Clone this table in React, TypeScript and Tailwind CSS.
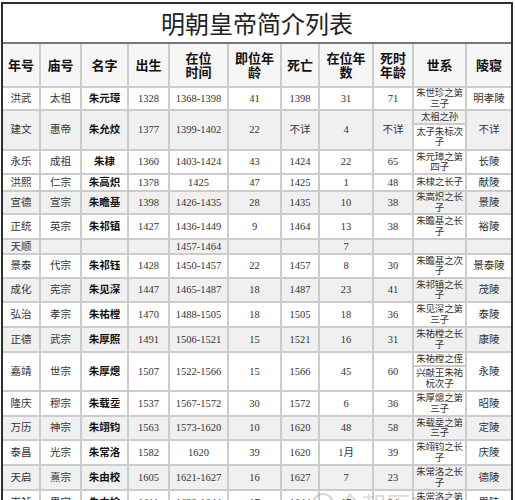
import React from 'react';

type Row = {
    era: string;
    temple: string;
    name: string;
    born: string;
    reign: string;
    ageIn: string;
    died: string;
    years: string;
    ageOut: string;
    lineage: string | [string, string];
    tomb: string;
    gray?: boolean;
    h: string;
};

const rows: Row[] = [
    { era: '洪武', temple: '太祖', name: '朱元璋', born: '1328', reign: '1368-1398', ageIn: '41', died: '1398', years: '31', ageOut: '71', lineage: '朱世珍之第三子', tomb: '明孝陵', h: 'h-[23px]' },
    { era: '建文', temple: '惠帝', name: '朱允炆', born: '1377', reign: '1399-1402', ageIn: '22', died: '不详', years: '4', ageOut: '不详', lineage: ['太祖之孙', '太子朱标次子'], tomb: '不详', gray: true, h: 'h-[14px]' },
    { era: '永乐', temple: '成祖', name: '朱棣', born: '1360', reign: '1403-1424', ageIn: '43', died: '1424', years: '22', ageOut: '65', lineage: '朱元璋之第四子', tomb: '长陵', h: 'h-[24px]' },
    { era: '洪熙', temple: '仁宗', name: '朱高炽', born: '1378', reign: '1425', ageIn: '47', died: '1425', years: '1', ageOut: '48', lineage: '朱棣之长子', tomb: '献陵', h: 'h-[17px]' },
    { era: '宣德', temple: '宣宗', name: '朱瞻基', born: '1398', reign: '1426-1435', ageIn: '28', died: '1435', years: '10', ageOut: '38', lineage: '朱高炽之长子', tomb: '景陵', gray: true, h: 'h-[22px]' },
    { era: '正统', temple: '英宗', name: '朱祁镇', born: '1427', reign: '1436-1449', ageIn: '9', died: '1464', years: '13', ageOut: '38', lineage: '朱瞻基之长子', tomb: '裕陵', h: 'h-[25px]' },
    { era: '天顺', temple: '', name: '', born: '', reign: '1457-1464', ageIn: '', died: '', years: '7', ageOut: '', lineage: '', tomb: '', gray: true, h: 'h-[15px]' },
    { era: '景泰', temple: '代宗', name: '朱祁钰', born: '1428', reign: '1450-1457', ageIn: '22', died: '1457', years: '8', ageOut: '30', lineage: '朱瞻基之次子', tomb: '景泰陵', h: 'h-[24px]' },
    { era: '成化', temple: '宪宗', name: '朱见深', born: '1447', reign: '1465-1487', ageIn: '18', died: '1487', years: '23', ageOut: '41', lineage: '朱祁镇之长子', tomb: '茂陵', gray: true, h: 'h-[24px]' },
    { era: '弘治', temple: '孝宗', name: '朱祐樘', born: '1470', reign: '1488-1505', ageIn: '18', died: '1505', years: '18', ageOut: '36', lineage: '朱见深之第三子', tomb: '泰陵', h: 'h-[25px]' },
    { era: '正德', temple: '武宗', name: '朱厚照', born: '1491', reign: '1506-1521', ageIn: '15', died: '1521', years: '16', ageOut: '31', lineage: '朱祐樘之长子', tomb: '康陵', gray: true, h: 'h-[25px]' },
    { era: '嘉靖', temple: '世宗', name: '朱厚熜', born: '1507', reign: '1522-1566', ageIn: '15', died: '1566', years: '45', ageOut: '60', lineage: ['朱祐樘之侄', '兴献王朱祐杬次子'], tomb: '永陵', h: 'h-[14px]' },
    { era: '隆庆', temple: '穆宗', name: '朱载坖', born: '1537', reign: '1567-1572', ageIn: '30', died: '1572', years: '6', ageOut: '36', lineage: '朱厚熜之第三子', tomb: '昭陵', h: 'h-[25px]' },
    { era: '万历', temple: '神宗', name: '朱翊钧', born: '1563', reign: '1573-1620', ageIn: '10', died: '1620', years: '48', ageOut: '58', lineage: '朱载坖之第三子', tomb: '定陵', gray: true, h: 'h-[24px]' },
    { era: '泰昌', temple: '光宗', name: '朱常洛', born: '1582', reign: '1620', ageIn: '39', died: '1620', years: '1月', ageOut: '39', lineage: '朱翊钧之长子', tomb: '庆陵', h: 'h-[25px]' },
    { era: '天启', temple: '熹宗', name: '朱由校', born: '1605', reign: '1621-1627', ageIn: '16', died: '1627', years: '7', ageOut: '23', lineage: '朱常洛之长子', tomb: '德陵', gray: true, h: 'h-[25px]' },
    { era: '崇祯', temple: '思宗', name: '朱由检', born: '1611', reign: '1628-1644', ageIn: '17', died: '1644', years: '17', ageOut: '34', lineage: '朱常洛之第五子', tomb: '思陵', h: 'h-[25px]' },
];

const headers = ['年号', '庙号', '名字', '出生', '在位\n时间', '即位年\n龄', '死亡', '在位年\n数', '死时\n年龄', '世系', '陵寝'];

const cell = 'border-2 border-[#cccccc] text-center align-middle p-0 first:border-l-0 last:border-r-0';
const lineageCell = `${cell} text-[9.5px] leading-[10.5px] tracking-[-0.2px]`;

export default function App() {
    return (
        <div className="relative w-[515px] h-[500px] overflow-hidden bg-white font-['Liberation_Serif','Noto_Sans_CJK_SC',serif] text-[#333]">
            <div className="ml-[1px] mt-[2px] w-[512px] border-x-2 border-t-2 border-[#2e2e2e]">
                <div className="h-[40px] flex items-center justify-center border-b-2 border-[#777] text-[24px] text-[#222] font-['Noto_Sans_CJK_SC',sans-serif]">
                    明朝皇帝简介列表
                </div>
                <table className="w-full table-fixed border-collapse">
                    <colgroup>
                        <col className="w-[37px]" />
                        <col className="w-[41px]" />
                        <col className="w-[47px]" />
                        <col className="w-[41px]" />
                        <col className="w-[59px]" />
                        <col className="w-[53px]" />
                        <col className="w-[38px]" />
                        <col className="w-[54px]" />
                        <col className="w-[40px]" />
                        <col className="w-[53px]" />
                        <col className="w-[45px]" />
                    </colgroup>
                    <thead>
                        <tr className="h-[43px] bg-[#f6f6f6]">
                            {headers.map(h => (
                                <th key={h} className={`${cell} border-t-0 whitespace-pre-line text-[13px] leading-[14px] font-bold text-[#111] font-['Noto_Sans_CJK_SC',sans-serif]`}>
                                    {h}
                                </th>
                            ))}
                        </tr>
                    </thead>
                    <tbody className="text-[10.5px] leading-[10px]">
                        {rows.map(r => {
                            const split = Array.isArray(r.lineage);
                            const span = split ? 2 : 1;
                            const bg = r.gray ? 'bg-[#f0f0f0]' : 'bg-white';
                            return (
                                <React.Fragment key={r.era}>
                                    <tr className={`${r.h} ${bg}`}>
                                        <td rowSpan={span} className={cell}>{r.era}</td>
                                        <td rowSpan={span} className={cell}>{r.temple}</td>
                                        <td rowSpan={span} className={`${cell} font-bold text-[#111]`}>{r.name}</td>
                                        <td rowSpan={span} className={cell}>{r.born}</td>
                                        <td rowSpan={span} className={cell}>{r.reign}</td>
                                        <td rowSpan={span} className={cell}>{r.ageIn}</td>
                                        <td rowSpan={span} className={cell}>{r.died}</td>
                                        <td rowSpan={span} className={cell}>{r.years}</td>
                                        <td rowSpan={span} className={cell}>{r.ageOut}</td>
                                        <td className={lineageCell}>{split ? r.lineage[0] : r.lineage}</td>
                                        <td rowSpan={span} className={cell}>{r.tomb}</td>
                                    </tr>
                                    {split && (
                                        <tr className={`${r.era === '建文' ? 'h-[26px]' : 'h-[25px]'} ${bg}`}>
                                            <td className={`${lineageCell} bg-white`}>{r.lineage[1]}</td>
                                        </tr>
                                    )}
                                </React.Fragment>
                            );
                        })}
                    </tbody>
                </table>
            </div>
            <div className="absolute left-[312px] top-[486px] flex items-center gap-[4px] text-[24px] text-[#9a9a9a]/40 font-['Noto_Sans_CJK_SC',sans-serif] pointer-events-none">
                <span className="w-[22px] h-[22px] rounded-full border-2 border-[#9a9a9a]/40" />
                <span>今朝历史馆</span>
            </div>
        </div>
    );
}
